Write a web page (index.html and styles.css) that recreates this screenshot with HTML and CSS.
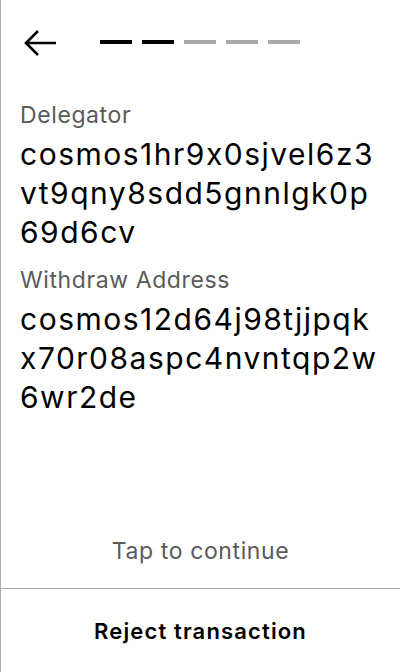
FILE: index.html
```html
<!DOCTYPE html>
<html>
<head>
<meta charset="utf-8">
<link rel="stylesheet" href="styles.css">
</head>
<body>
<div class="screen">
  <header class="top">
    <button class="back" aria-label="Back">
      <svg width="34" height="30" viewBox="0 0 34 30"><path d="M33 15H3M15 3L3 15L15 27" fill="none" stroke="#000" stroke-width="2.6"/></svg>
    </button>
    <div class="steps">
      <span class="step on"></span>
      <span class="step on"></span>
      <span class="step"></span>
      <span class="step"></span>
      <span class="step"></span>
    </div>
  </header>
  <main class="content">
    <div class="field">
      <div class="label">Delegator</div>
      <div class="value">cosmos1hr9x0sjvel6z3<wbr>vt9qny8sdd5gnnlgk0p<wbr>69d6cv</div>
    </div>
    <div class="field">
      <div class="label">Withdraw Address</div>
      <div class="value">cosmos12d64j98tjjpqk<wbr>x70r08aspc4nvntqp2w<wbr>6wr2de</div>
    </div>
  </main>
  <div class="tap">Tap to continue</div>
  <footer class="reject">Reject transaction</footer>
</div>
</body>
</html>
```
FILE: styles.css
```css
html, body { margin: 0; padding: 0; background: #fff; }
body {
  font-family: Inter, "Noto Sans", sans-serif;
  color: #000;
  font-feature-settings: "calt" 0;
}
.screen {
  width: 400px; height: 672px; box-sizing: border-box;
  border-left: 1px solid #aaa;
  display: flex; flex-direction: column;
}
.top { display: flex; align-items: center; height: 84px; padding: 2px 0 0 22px; box-sizing: border-box; flex: none; }
.back { background: none; border: 0; padding: 0; margin: 0; width: 34px; height: 30px; display: block; }
.back svg { display: block; }
.steps { display: flex; gap: 10px; margin-left: 43px; margin-top: -2px; }
.step { width: 32px; height: 4px; background: #aaa; }
.step.on { background: #000; }
.content { padding: 16px 0 0 19px; flex: 1; }
.field { margin-bottom: 13px; }
.label { font-size: 23px; color: #5a5a5a; line-height: 30px; letter-spacing: 0.6px; }
.value { font-size: 30px; line-height: 39px; letter-spacing: 1.5px; margin-top: 5px; }
.tap { text-align: center; font-size: 23px; color: #5a5a5a; line-height: 30px; letter-spacing: 0.6px; padding-bottom: 22px; flex: none; }
.reject { border-top: 1px solid #aaa; height: 84px; box-sizing: border-box; display: flex; align-items: center; justify-content: center; font-size: 22px; line-height: 30px; font-weight: 600; letter-spacing: 1.15px; flex: none; }
```
